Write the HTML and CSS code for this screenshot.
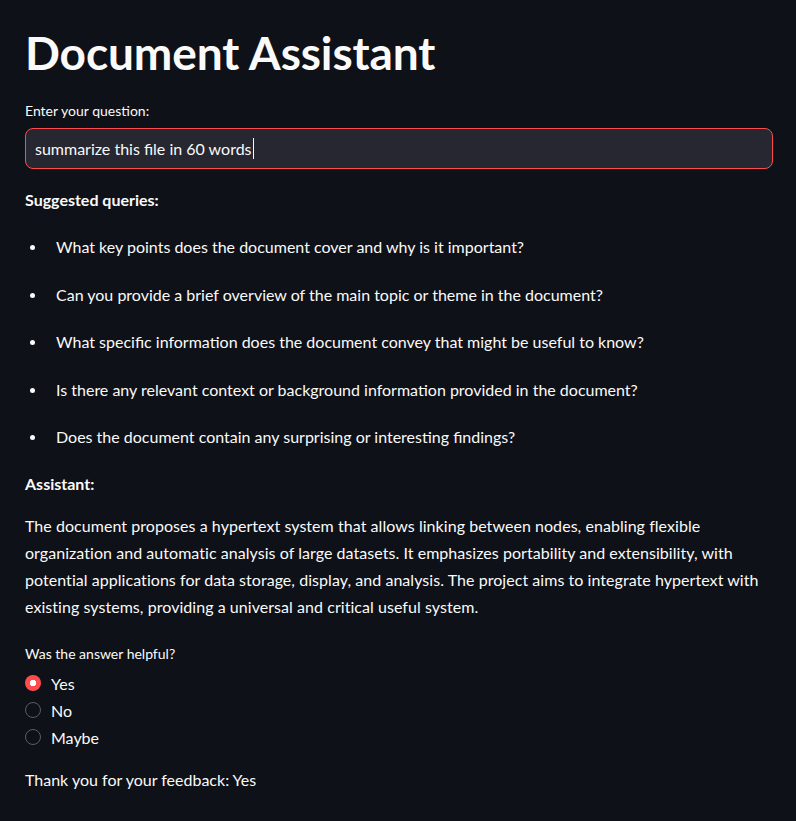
FILE: index.html
```html
<!DOCTYPE html>
<html lang="en">
<head>
<meta charset="utf-8">
<title>Document Assistant</title>
<link rel="stylesheet" href="styles.css">
</head>
<body>
<main class="app">
  <h1 class="title">Document Assistant</h1>
  <div class="label">Enter your question:</div>
  <div class="input">summarize this file in 60 words<span class="caret"></span></div>
  <div class="strong-line">Suggested queries:</div>
  <ul class="queries">
    <li>What key points does the document cover and why is it important?</li>
    <li>Can you provide a brief overview of the main topic or theme in the document?</li>
    <li>What specific information does the document convey that might be useful to know?</li>
    <li>Is there any relevant context or background information provided in the document?</li>
    <li>Does the document contain any surprising or interesting findings?</li>
  </ul>
  <div class="strong-line assistant">Assistant:</div>
  <p class="answer">The document proposes a hypertext system that allows linking between nodes, enabling flexible organization and automatic analysis of large datasets. It emphasizes portability and extensibility, with potential applications for data storage, display, and analysis. The project aims to integrate hypertext with existing systems, providing a universal and critical useful system.</p>
  <div class="label helpful">Was the answer helpful?</div>
  <div class="radios">
    <div class="radio"><span class="dot checked"></span>Yes</div>
    <div class="radio"><span class="dot"></span>No</div>
    <div class="radio"><span class="dot"></span>Maybe</div>
  </div>
  <div class="thanks">Thank you for your feedback: Yes</div>
</main>
</body>
</html>
```

FILE: styles.css
```css
html, body {
  margin: 0;
  padding: 0;
  background: #0e1117;
}
body {
  font-family: Lato, "Open Sans", sans-serif;
  color: #fafafa;
  height: 821px;
  overflow: hidden;
}
.app {
  padding: 25px 23px 0 25px;
  display: flex;
  flex-direction: column;
}
.title {
  margin: 0;
  font-size: 46px;
  line-height: 56px;
  font-weight: 700;
  letter-spacing: -0.1px;
}
.label {
  margin-top: 20px;
  font-size: 14px;
  line-height: 20px;
}
.input {
  margin-top: 7px;
  height: 41px;
  box-sizing: border-box;
  border: 1px solid #ff4b4b;
  border-radius: 8px;
  background: #262730;
  padding: 0 9px;
  display: flex;
  align-items: center;
  font-size: 16px;
}
.caret {
  display: inline-block;
  width: 1px;
  height: 21px;
  background: #fafafa;
  margin-left: 1px;
}
.strong-line {
  margin-top: 19px;
  font-size: 16px;
  line-height: 24px;
  font-weight: 700;
}
.queries {
  margin: 23px 0 0;
  padding: 0;
  list-style: none;
  display: flex;
  flex-direction: column;
  gap: 23.5px;
}
.queries li {
  position: relative;
  padding-left: 31px;
  font-size: 16px;
  line-height: 24px;
}
.queries li::before {
  content: "";
  position: absolute;
  left: 5px;
  top: 10px;
  width: 5px;
  height: 5px;
  border-radius: 50%;
  background: #fafafa;
}
.assistant {
  margin-top: 23px;
}
.answer {
  margin: 15.5px 0 0;
  font-size: 16px;
  line-height: 27.3px;
  letter-spacing: 0.05px;
}
.helpful {
  margin-top: 23.5px;
}
.radios {
  margin-top: 5.5px;
  display: flex;
  flex-direction: column;
}
.radio {
  display: flex;
  align-items: center;
  gap: 10px;
  height: 27px;
  font-size: 16px;
}
.dot {
  width: 16px;
  height: 16px;
  box-sizing: border-box;
  border-radius: 50%;
  border: 1px solid #5b5d66;
  flex: none;
}
.dot.checked {
  border: none;
  background: radial-gradient(circle, #ffffff 0 3px, #ff4b4b 3.5px);
}
.thanks {
  margin-top: 17.5px;
  font-size: 16px;
  line-height: 24px;
}
```
